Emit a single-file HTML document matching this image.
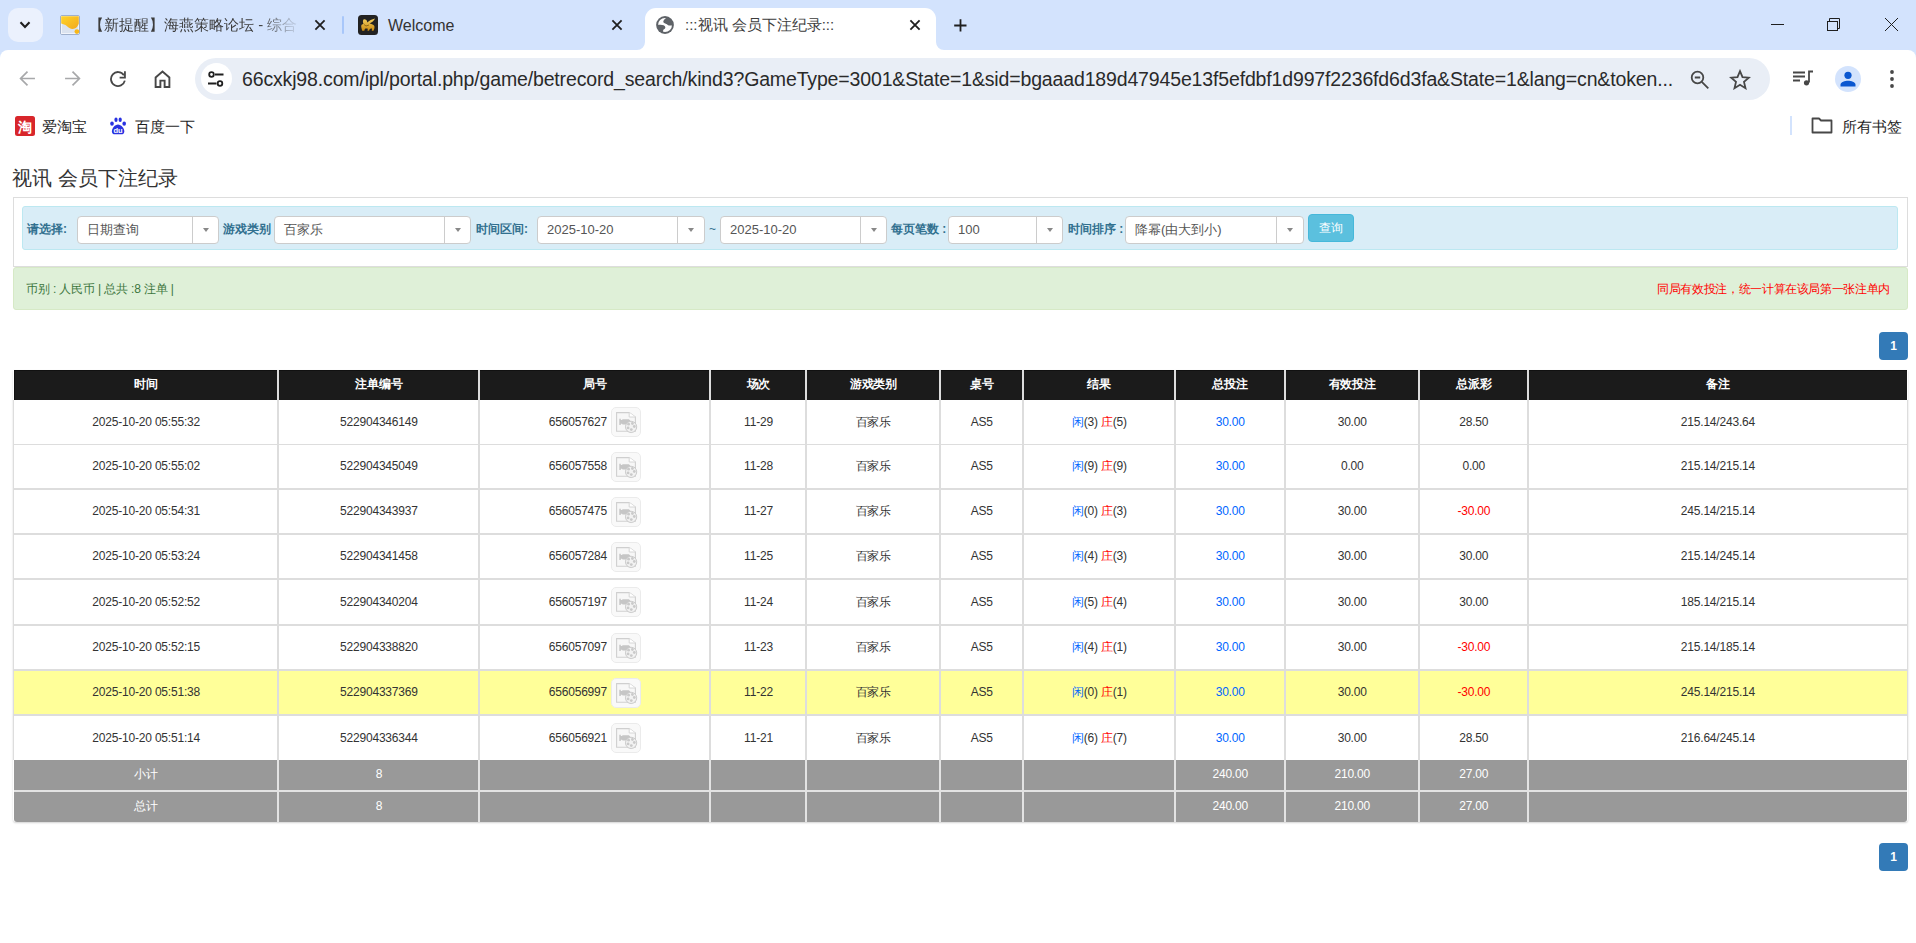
<!DOCTYPE html>
<html><head><meta charset="utf-8"><title>视讯 会员下注纪录</title>
<style>
*{margin:0;padding:0;box-sizing:border-box}
html,body{width:1916px;height:943px;overflow:hidden;background:#fff;font-family:"Liberation Sans",sans-serif;color:#333}
.a{position:absolute}
.tabstrip{left:0;top:0;width:1916px;height:60px;background:#d3e3fd}
.toolbar{left:0;top:50px;width:1916px;height:50px;background:#fff;border-radius:8px 8px 0 0}
.tabtxt{font-size:15px;color:#3c3c3c;white-space:nowrap;line-height:16px}
.omni{left:195px;top:58px;width:1575px;height:42px;background:#e9eef6;border-radius:21px}
.url{left:242px;top:68px;font-size:19.5px;line-height:22px;color:#2a2a2a;white-space:nowrap;letter-spacing:-0.15px}
.bm{font-size:15px;color:#1f1f1f;line-height:16px;white-space:nowrap}
.ttl{left:12px;top:166px;font-size:20px;line-height:24px;color:#333;white-space:nowrap}
.panel{left:13px;top:197px;width:1895px;height:70px;border:1px solid #ddd;background:#fff}
.info{left:22px;top:206px;width:1876px;height:44px;background:#d9edf7;border:1px solid #bce8f1;border-radius:3px}
.lbl{font-size:12px;font-weight:bold;color:#31708f;line-height:14px;white-space:nowrap;top:222px}
.sel{top:216px;height:28px;background:#fff;border:1px solid #ccc;border-radius:4px}
.sel .t{position:absolute;left:9px;top:5px;font-size:13px;line-height:15px;color:#555;white-space:nowrap}
.sel .d{position:absolute;top:0;bottom:0;width:1px;background:#ccc}
.sel .c{position:absolute;top:11px;width:0;height:0;border-left:3.5px solid transparent;border-right:3.5px solid transparent;border-top:4px solid #888}
.btn{left:1308px;top:214px;width:46px;height:28px;background:#5bc0de;border:1px solid #46b8da;border-radius:4px;color:#fff;font-size:12px;line-height:26px;text-align:center}
.ok{left:13px;top:267px;width:1895px;height:43px;background:#dff0d8;border:1px solid #d6e9c6;border-radius:3px}
.oktxt{font-size:12px;color:#3c763d;line-height:14px;white-space:nowrap;top:282px}
.pg{width:29px;height:28px;background:#337ab7;border-radius:4px;color:#fff;font-size:12px;font-weight:bold;text-align:center;line-height:28px;left:1879px}
.hrow{background:#1b1b1b}
.cell{position:absolute;font-size:12px;line-height:15px;white-space:nowrap;transform:translateX(-50%);letter-spacing:-0.2px}
.th{color:#fff;font-weight:bold}
.vl{position:absolute;width:2px;background:#ddd}
.hl{position:absolute;left:14px;width:1893px;background:#ddd}
.film{position:absolute}
.bl{color:#0066ff}.rd{color:#ff0000}
</style></head><body>

<div class="a tabstrip"></div>
<div class="a" style="left:8px;top:8px;width:35px;height:34px;background:#ebf1fd;border-radius:10px"></div>
<svg class="a" style="left:17px;top:17px" width="16" height="16" viewBox="0 0 16 16"><path d="M3.5 5.2L8 9.9l4.5-4.7" fill="none" stroke="#1f1f1f" stroke-width="2.1"/></svg>
<svg class="a" style="left:60px;top:15px" width="20" height="20" viewBox="0 0 20 20"><defs><linearGradient id="yg" x1="0" y1="0" x2="1" y2="1"><stop offset="0" stop-color="#ffd42a"/><stop offset="1" stop-color="#f2a91d"/></linearGradient></defs><rect x="0.5" y="0.5" width="19" height="19" rx="1.5" fill="#e9eef8" stroke="#9fb0cc"/><rect x="1.5" y="1.5" width="17" height="17" fill="#dbe3ef" stroke="#f4f7fc" stroke-width="0.8"/><path d="M1.2 1.2H18.8V8.5C18.3 10 17.8 10.5 17.3 11.5C16.3 13.2 14.5 14.1 12 14C9.5 13.8 8.3 12.2 6.8 11C5.2 9.6 3 9.4 1.2 8.6Z" fill="url(#yg)"/><circle cx="16.9" cy="16.6" r="2.4" fill="#f7b718"/></svg>
<div class="a tabtxt" style="left:89px;top:17px;width:212px;overflow:hidden;-webkit-mask-image:linear-gradient(90deg,#000 80%,transparent)">【新提醒】海燕策略论坛 - 综合</div>
<svg class="a" style="left:313px;top:18px" width="14" height="14" viewBox="0 0 14 14"><path d="M2.4 2.4l9.2 9.2M11.6 2.4L2.4 11.6" stroke="#1f1f1f" stroke-width="1.8"/></svg>
<div class="a" style="left:342px;top:16px;width:2px;height:18px;background:#a8c7fa;border-radius:1px"></div>
<svg class="a" style="left:358px;top:15px" width="20" height="20" viewBox="0 0 20 20"><defs><linearGradient id="gg" x1="0" y1="0" x2="0" y2="1"><stop offset="0" stop-color="#f4d060"/><stop offset="1" stop-color="#c98a12"/></linearGradient></defs><rect width="20" height="20" rx="3.5" fill="#222"/><path d="M5.5 4.5C7 4 8.5 4.8 9 6.2L9.3 7.5C11 5.8 14 4.2 17 3.5C16 5.5 14 7.5 11.5 8.5C13 8.8 15 9.5 16 10.5C16.8 11.5 16.5 13 16 14.5L15.5 15.8H13.8L14 13.5C13 13.2 12 13.6 11.5 14.5L11 15.8H9.5L9.8 13.8C8.5 13.5 7.5 13.5 6.8 14L6.3 15.8H4.2C3.8 14 3.2 12.5 3.2 11C3.3 9.8 4.2 9 5.5 9C5 7.5 4.5 6 5.5 4.5Z" fill="url(#gg)"/><path d="M6 9.5l2 1.5 3-1" stroke="#7a5208" stroke-width="0.7" fill="none"/></svg>
<div class="a tabtxt" style="left:388px;top:18px;font-size:16px;color:#333">Welcome</div>
<svg class="a" style="left:610px;top:18px" width="14" height="14" viewBox="0 0 14 14"><path d="M2.4 2.4l9.2 9.2M11.6 2.4L2.4 11.6" stroke="#1f1f1f" stroke-width="1.8"/></svg>
<div class="a" style="left:645px;top:8px;width:291px;height:42px;background:#fff;border-radius:11px 11px 0 0"></div>
<svg class="a" style="left:637px;top:42px" width="307" height="8" viewBox="0 0 307 8"><path d="M0 8a8 8 0 0 0 8-8v8z" fill="#fff"/><path d="M307 8a8 8 0 0 1-8-8v8z" fill="#fff"/></svg>
<svg class="a" style="left:655px;top:15px" width="20" height="20" viewBox="0 0 20 20"><defs><clipPath id="gc"><circle cx="10" cy="10" r="8"/></clipPath></defs><circle cx="10" cy="10" r="8.9" fill="#5f6368"/><circle cx="10" cy="10" r="7" fill="#fff"/><g clip-path="url(#gc)" fill="#5f6368"><path d="M10.5 0L11.2 3C9.2 4.3 7.6 6.3 8.6 7.6C9.8 8.8 11.8 8.9 12.8 9.9C13.6 10.7 15.5 10.8 20 10.3V0Z"/><path d="M0 9.8H3.5C6 9.8 8.6 9.9 9.7 11C10.8 12.2 10.4 13.6 8.9 14.3C8 14.8 8 16 8 20H0Z"/></g></svg>
<div class="a tabtxt" style="left:685px;top:17px">:::视讯 会员下注纪录:::</div>
<svg class="a" style="left:908px;top:18px" width="14" height="14" viewBox="0 0 14 14"><path d="M2.4 2.4l9.2 9.2M11.6 2.4L2.4 11.6" stroke="#1f1f1f" stroke-width="1.8"/></svg>
<svg class="a" style="left:953px;top:18px" width="15" height="15" viewBox="0 0 15 15"><path d="M7.5 1.2v12.3M1.2 7.5h12.3" stroke="#1f1f1f" stroke-width="1.8"/></svg>
<div class="a" style="left:1771px;top:24px;width:13px;height:1px;background:#1f1f1f"></div>
<svg class="a" style="left:1826px;top:17px" width="16" height="16" viewBox="0 0 16 16"><rect x="1.5" y="4.5" width="10" height="9" fill="none" stroke="#1f1f1f" stroke-width="1"/><path d="M3.5 4.5V1.5H13.5V11.5H11.5" fill="none" stroke="#1f1f1f" stroke-width="1"/></svg>
<svg class="a" style="left:1884px;top:17px" width="15" height="15" viewBox="0 0 15 15"><path d="M1 1l13 13M14 1L1 14" stroke="#1f1f1f" stroke-width="1"/></svg>
<div class="a toolbar"></div>
<svg class="a" style="left:19px;top:70px" width="17" height="17" viewBox="0 0 16 16"><path d="M15 8H2M8 1.5L1.5 8 8 14.5" fill="none" stroke="#a7a8aa" stroke-width="1.6"/></svg>
<svg class="a" style="left:64px;top:70px" width="17" height="17" viewBox="0 0 16 16"><path d="M1 8h13M8 1.5L14.5 8 8 14.5" fill="none" stroke="#a7a8aa" stroke-width="1.6"/></svg>
<svg class="a" style="left:109px;top:70px" width="17" height="17" viewBox="0 0 16 16"><path d="M14.9 10A6.6 6.6 0 1 1 14 4.9" fill="none" stroke="#474747" stroke-width="1.7"/><path d="M15 1.2V7.1H10" fill="none" stroke="#474747" stroke-width="1.7"/></svg>
<svg class="a" style="left:154px;top:70px" width="17" height="18" viewBox="0 0 16 17"><path d="M1.5 16V7L8 1.5 14.5 7v9h-4.5v-6h-4v6z" fill="none" stroke="#474747" stroke-width="1.8" stroke-linejoin="miter"/></svg>
<div class="a omni"></div>
<div class="a" style="left:201px;top:63px;width:31px;height:31px;background:#fff;border-radius:50%"></div>
<svg class="a" style="left:207px;top:70px" width="18" height="18" viewBox="0 0 18 18"><circle cx="4.5" cy="4.5" r="2.3" fill="none" stroke="#1f1f1f" stroke-width="1.8"/><path d="M8 4.5h8.5M1 13.5h8.5" stroke="#1f1f1f" stroke-width="1.8"/><circle cx="13" cy="13.5" r="2.3" fill="none" stroke="#1f1f1f" stroke-width="1.8"/></svg>
<div class="a url">66cxkj98.com/ipl/portal.php/game/betrecord_search/kind3?GameType=3001&amp;State=1&amp;sid=bgaaad189d47945e13f5efdbf1d997f2236fd6d3fa&amp;State=1&amp;lang=cn&amp;token...</div>
<svg class="a" style="left:1690px;top:70px" width="20" height="20" viewBox="0 0 20 20"><circle cx="7.5" cy="7.5" r="5.8" fill="none" stroke="#474747" stroke-width="1.8"/><path d="M4.8 7.5h5.4M11.8 11.8l6.5 6.5" stroke="#474747" stroke-width="1.8"/></svg>
<svg class="a" style="left:1729px;top:69px" width="22" height="21" viewBox="0 0 22 21"><path d="M11 2.2l2.5 6 6.4.5-4.9 4.2 1.5 6.3L11 15.8l-5.5 3.4 1.5-6.3-4.9-4.2 6.4-.5z" fill="none" stroke="#474747" stroke-width="1.8" stroke-linejoin="miter"/></svg>
<svg class="a" style="left:1792px;top:70px" width="22" height="17" viewBox="0 0 22 17"><path d="M1 2.5h12M1 6.5h12M1 10.5h7" stroke="#474747" stroke-width="1.8"/><path d="M17 12.5V1.5h4" fill="none" stroke="#474747" stroke-width="1.8"/><circle cx="14.5" cy="12.8" r="2.6" fill="#474747"/></svg>
<div class="a" style="left:1835px;top:66px;width:26px;height:26px;background:#d3e3fd;border-radius:50%"></div>
<svg class="a" style="left:1838px;top:69px" width="20" height="20" viewBox="0 0 20 20"><circle cx="10" cy="6.3" r="3.6" fill="#0b57d0"/><path d="M2.5 15.8c0-2.6 4.5-4 7.5-4s7.5 1.4 7.5 4v1.6h-15z" fill="#0b57d0"/></svg>
<svg class="a" style="left:1888px;top:69px" width="8" height="20" viewBox="0 0 8 20"><circle cx="4" cy="3" r="1.9" fill="#474747"/><circle cx="4" cy="10" r="1.9" fill="#474747"/><circle cx="4" cy="17" r="1.9" fill="#474747"/></svg>
<svg class="a" style="left:15px;top:116px" width="20" height="20" viewBox="0 0 20 20"><rect width="20" height="20" rx="2.5" fill="#d8262b"/><text x="10" y="15.5" font-size="14" font-weight="bold" text-anchor="middle" fill="#fff" font-family="Liberation Sans,sans-serif">淘</text></svg>
<div class="a bm" style="left:42px;top:119px">爱淘宝</div>
<svg class="a" style="left:109px;top:117px" width="18" height="18" viewBox="0 0 18 18"><ellipse cx="7" cy="2.8" rx="1.6" ry="2.3" fill="#2932e1"/><ellipse cx="11.2" cy="2.8" rx="1.6" ry="2.3" fill="#2932e1"/><ellipse cx="3" cy="6.6" rx="1.8" ry="2.2" fill="#2932e1"/><ellipse cx="15.2" cy="6.6" rx="1.8" ry="2.2" fill="#2932e1"/><path d="M9 7.6C12 7.6 15.3 11.3 15.3 14.4C15.3 16.4 13.9 17.2 12.5 17.2H5.7C4.3 17.2 2.9 16.4 2.9 14.4C2.9 11.3 6 7.6 9 7.6Z" fill="#2932e1"/><text x="9.1" y="15.6" font-size="7.5" font-weight="bold" fill="#fff" text-anchor="middle" font-family="Liberation Sans,sans-serif">du</text></svg>
<div class="a bm" style="left:135px;top:119px">百度一下</div>
<div class="a" style="left:1790px;top:116px;width:2px;height:19px;background:#d3e3fd"></div>
<svg class="a" style="left:1811px;top:117px" width="22" height="17" viewBox="0 0 22 17"><path d="M1.5 1.5h6.5l2 2h10.5v12H1.5z" fill="none" stroke="#474747" stroke-width="1.8" stroke-linejoin="round"/></svg>
<div class="a bm" style="left:1842px;top:119px">所有书签</div>
<div class="a ttl">视讯 会员下注纪录</div>
<div class="a panel"></div>
<div class="a info"></div>
<div class="a lbl" style="left:27px">请选择:</div>
<div class="a sel" style="left:77px;width:142px"><div class="t">日期查询</div><div class="d" style="left:114px"></div><div class="c" style="left:124.5px"></div></div>
<div class="a lbl" style="left:223px">游戏类别</div>
<div class="a sel" style="left:274px;width:197px"><div class="t">百家乐</div><div class="d" style="left:169px"></div><div class="c" style="left:179.5px"></div></div>
<div class="a lbl" style="left:476px">时间区间:</div>
<div class="a sel" style="left:537px;width:168px"><div class="t">2025-10-20</div><div class="d" style="left:139px"></div><div class="c" style="left:150.0px"></div></div>
<div class="a lbl" style="left:709px;font-weight:normal">~</div>
<div class="a sel" style="left:720px;width:167px"><div class="t">2025-10-20</div><div class="d" style="left:139px"></div><div class="c" style="left:149.5px"></div></div>
<div class="a lbl" style="left:891px">每页笔数 :</div>
<div class="a sel" style="left:948px;width:115px"><div class="t">100</div><div class="d" style="left:87px"></div><div class="c" style="left:97.5px"></div></div>
<div class="a lbl" style="left:1068px">时间排序 :</div>
<div class="a sel" style="left:1125px;width:179px"><div class="t">降幂(由大到小)</div><div class="d" style="left:150px"></div><div class="c" style="left:161.0px"></div></div>
<div class="a btn">查询</div>
<div class="a ok"></div>
<div class="a oktxt" style="left:26px;letter-spacing:-0.15px">币别 : 人民币 | 总共 :8 注单 |</div>
<div class="a oktxt" style="left:1657px;color:#ff0000;letter-spacing:-0.35px">同局有效投注，统一计算在该局第一张注单内</div>
<div class="a pg" style="top:332px">1</div>
<div class="a pg" style="top:843px">1</div>
<div class="a" style="left:13px;top:370px;width:1895px;height:452px;border-radius:0 0 3px 3px;box-shadow:0 1px 2px rgba(0,0,0,.18)"></div>
<div class="a hrow" style="left:14px;top:370px;width:1893px;height:30px;box-shadow:inset 1px 1px 0 #111"></div>
<div class="cell th" style="left:146.2px;top:377px">时间</div>
<div class="cell th" style="left:378.9px;top:377px">注单编号</div>
<div class="cell th" style="left:594.9px;top:377px">局号</div>
<div class="cell th" style="left:758.5px;top:377px">场次</div>
<div class="cell th" style="left:873.4px;top:377px">游戏类别</div>
<div class="cell th" style="left:981.8px;top:377px">桌号</div>
<div class="cell th" style="left:1099.3px;top:377px">结果</div>
<div class="cell th" style="left:1230.2px;top:377px">总投注</div>
<div class="cell th" style="left:1352.2px;top:377px">有效投注</div>
<div class="cell th" style="left:1473.8px;top:377px">总派彩</div>
<div class="cell th" style="left:1717.9px;top:377px">备注</div>
<div class="cell" style="left:146.2px;top:414.5px">2025-10-20 05:55:32</div>
<div class="cell" style="left:378.9px;top:414.5px">522904346149</div>
<div class="cell" style="left:577.9px;top:414.5px">656057627</div>
<div class="a" style="left:611px;top:407.0px"><svg class="film" width="30" height="30" viewBox="0 0 30 30"><rect x="0.5" y="0.5" width="29" height="29" rx="4.5" fill="#f9f9f9" stroke="#ebebeb"/><path d="M5.6 5.6h12.6l6.2 4.4v14.2H5.6z" fill="#f7f7f7" stroke="#cfcfcf" stroke-width="1.1"/><path d="M18.2 5.6v4.4h6.2" fill="#fff" stroke="#d6d6d6" stroke-width="1"/><path d="M8.3 11.8h1.5v1.2h1.2l.6-.8h6.2l1.5 1.2v3.2l-1.5 1h-6.2l-.6-.8h-1.2v1.1h-1.5z" fill="#c6c6c6"/><circle cx="20.1" cy="19.9" r="5.6" fill="#f2f2f2" stroke="#cbcbcb" stroke-width="1"/><g fill="#cacaca"><circle cx="17.6" cy="17.2" r="1.4"/><circle cx="21.4" cy="16.5" r="1.4"/><circle cx="23.3" cy="19.5" r="1.4"/><circle cx="20.3" cy="22.6" r="1.4"/><circle cx="17.1" cy="20.9" r="1.4"/></g></svg></div>
<div class="cell" style="left:758.5px;top:414.5px">11-29</div>
<div class="cell" style="left:873.4px;top:414.5px">百家乐</div>
<div class="cell" style="left:981.8px;top:414.5px">AS5</div>
<div class="cell" style="left:1099.3px;top:414.5px"><span class="bl">闲</span>(3) <span class="rd">庄</span>(5)</div>
<div class="cell bl" style="left:1230.2px;top:414.5px">30.00</div>
<div class="cell" style="left:1352.2px;top:414.5px">30.00</div>
<div class="cell" style="left:1473.8px;top:414.5px">28.50</div>
<div class="cell" style="left:1717.9px;top:414.5px">215.14/243.64</div>
<div class="cell" style="left:146.2px;top:459.0px">2025-10-20 05:55:02</div>
<div class="cell" style="left:378.9px;top:459.0px">522904345049</div>
<div class="cell" style="left:577.9px;top:459.0px">656057558</div>
<div class="a" style="left:611px;top:451.5px"><svg class="film" width="30" height="30" viewBox="0 0 30 30"><rect x="0.5" y="0.5" width="29" height="29" rx="4.5" fill="#f9f9f9" stroke="#ebebeb"/><path d="M5.6 5.6h12.6l6.2 4.4v14.2H5.6z" fill="#f7f7f7" stroke="#cfcfcf" stroke-width="1.1"/><path d="M18.2 5.6v4.4h6.2" fill="#fff" stroke="#d6d6d6" stroke-width="1"/><path d="M8.3 11.8h1.5v1.2h1.2l.6-.8h6.2l1.5 1.2v3.2l-1.5 1h-6.2l-.6-.8h-1.2v1.1h-1.5z" fill="#c6c6c6"/><circle cx="20.1" cy="19.9" r="5.6" fill="#f2f2f2" stroke="#cbcbcb" stroke-width="1"/><g fill="#cacaca"><circle cx="17.6" cy="17.2" r="1.4"/><circle cx="21.4" cy="16.5" r="1.4"/><circle cx="23.3" cy="19.5" r="1.4"/><circle cx="20.3" cy="22.6" r="1.4"/><circle cx="17.1" cy="20.9" r="1.4"/></g></svg></div>
<div class="cell" style="left:758.5px;top:459.0px">11-28</div>
<div class="cell" style="left:873.4px;top:459.0px">百家乐</div>
<div class="cell" style="left:981.8px;top:459.0px">AS5</div>
<div class="cell" style="left:1099.3px;top:459.0px"><span class="bl">闲</span>(9) <span class="rd">庄</span>(9)</div>
<div class="cell bl" style="left:1230.2px;top:459.0px">30.00</div>
<div class="cell" style="left:1352.2px;top:459.0px">0.00</div>
<div class="cell" style="left:1473.8px;top:459.0px">0.00</div>
<div class="cell" style="left:1717.9px;top:459.0px">215.14/215.14</div>
<div class="cell" style="left:146.2px;top:504.0px">2025-10-20 05:54:31</div>
<div class="cell" style="left:378.9px;top:504.0px">522904343937</div>
<div class="cell" style="left:577.9px;top:504.0px">656057475</div>
<div class="a" style="left:611px;top:496.5px"><svg class="film" width="30" height="30" viewBox="0 0 30 30"><rect x="0.5" y="0.5" width="29" height="29" rx="4.5" fill="#f9f9f9" stroke="#ebebeb"/><path d="M5.6 5.6h12.6l6.2 4.4v14.2H5.6z" fill="#f7f7f7" stroke="#cfcfcf" stroke-width="1.1"/><path d="M18.2 5.6v4.4h6.2" fill="#fff" stroke="#d6d6d6" stroke-width="1"/><path d="M8.3 11.8h1.5v1.2h1.2l.6-.8h6.2l1.5 1.2v3.2l-1.5 1h-6.2l-.6-.8h-1.2v1.1h-1.5z" fill="#c6c6c6"/><circle cx="20.1" cy="19.9" r="5.6" fill="#f2f2f2" stroke="#cbcbcb" stroke-width="1"/><g fill="#cacaca"><circle cx="17.6" cy="17.2" r="1.4"/><circle cx="21.4" cy="16.5" r="1.4"/><circle cx="23.3" cy="19.5" r="1.4"/><circle cx="20.3" cy="22.6" r="1.4"/><circle cx="17.1" cy="20.9" r="1.4"/></g></svg></div>
<div class="cell" style="left:758.5px;top:504.0px">11-27</div>
<div class="cell" style="left:873.4px;top:504.0px">百家乐</div>
<div class="cell" style="left:981.8px;top:504.0px">AS5</div>
<div class="cell" style="left:1099.3px;top:504.0px"><span class="bl">闲</span>(0) <span class="rd">庄</span>(3)</div>
<div class="cell bl" style="left:1230.2px;top:504.0px">30.00</div>
<div class="cell" style="left:1352.2px;top:504.0px">30.00</div>
<div class="cell rd" style="left:1473.8px;top:504.0px">-30.00</div>
<div class="cell" style="left:1717.9px;top:504.0px">245.14/215.14</div>
<div class="cell" style="left:146.2px;top:549.0px">2025-10-20 05:53:24</div>
<div class="cell" style="left:378.9px;top:549.0px">522904341458</div>
<div class="cell" style="left:577.9px;top:549.0px">656057284</div>
<div class="a" style="left:611px;top:541.5px"><svg class="film" width="30" height="30" viewBox="0 0 30 30"><rect x="0.5" y="0.5" width="29" height="29" rx="4.5" fill="#f9f9f9" stroke="#ebebeb"/><path d="M5.6 5.6h12.6l6.2 4.4v14.2H5.6z" fill="#f7f7f7" stroke="#cfcfcf" stroke-width="1.1"/><path d="M18.2 5.6v4.4h6.2" fill="#fff" stroke="#d6d6d6" stroke-width="1"/><path d="M8.3 11.8h1.5v1.2h1.2l.6-.8h6.2l1.5 1.2v3.2l-1.5 1h-6.2l-.6-.8h-1.2v1.1h-1.5z" fill="#c6c6c6"/><circle cx="20.1" cy="19.9" r="5.6" fill="#f2f2f2" stroke="#cbcbcb" stroke-width="1"/><g fill="#cacaca"><circle cx="17.6" cy="17.2" r="1.4"/><circle cx="21.4" cy="16.5" r="1.4"/><circle cx="23.3" cy="19.5" r="1.4"/><circle cx="20.3" cy="22.6" r="1.4"/><circle cx="17.1" cy="20.9" r="1.4"/></g></svg></div>
<div class="cell" style="left:758.5px;top:549.0px">11-25</div>
<div class="cell" style="left:873.4px;top:549.0px">百家乐</div>
<div class="cell" style="left:981.8px;top:549.0px">AS5</div>
<div class="cell" style="left:1099.3px;top:549.0px"><span class="bl">闲</span>(4) <span class="rd">庄</span>(3)</div>
<div class="cell bl" style="left:1230.2px;top:549.0px">30.00</div>
<div class="cell" style="left:1352.2px;top:549.0px">30.00</div>
<div class="cell" style="left:1473.8px;top:549.0px">30.00</div>
<div class="cell" style="left:1717.9px;top:549.0px">215.14/245.14</div>
<div class="cell" style="left:146.2px;top:594.5px">2025-10-20 05:52:52</div>
<div class="cell" style="left:378.9px;top:594.5px">522904340204</div>
<div class="cell" style="left:577.9px;top:594.5px">656057197</div>
<div class="a" style="left:611px;top:587.0px"><svg class="film" width="30" height="30" viewBox="0 0 30 30"><rect x="0.5" y="0.5" width="29" height="29" rx="4.5" fill="#f9f9f9" stroke="#ebebeb"/><path d="M5.6 5.6h12.6l6.2 4.4v14.2H5.6z" fill="#f7f7f7" stroke="#cfcfcf" stroke-width="1.1"/><path d="M18.2 5.6v4.4h6.2" fill="#fff" stroke="#d6d6d6" stroke-width="1"/><path d="M8.3 11.8h1.5v1.2h1.2l.6-.8h6.2l1.5 1.2v3.2l-1.5 1h-6.2l-.6-.8h-1.2v1.1h-1.5z" fill="#c6c6c6"/><circle cx="20.1" cy="19.9" r="5.6" fill="#f2f2f2" stroke="#cbcbcb" stroke-width="1"/><g fill="#cacaca"><circle cx="17.6" cy="17.2" r="1.4"/><circle cx="21.4" cy="16.5" r="1.4"/><circle cx="23.3" cy="19.5" r="1.4"/><circle cx="20.3" cy="22.6" r="1.4"/><circle cx="17.1" cy="20.9" r="1.4"/></g></svg></div>
<div class="cell" style="left:758.5px;top:594.5px">11-24</div>
<div class="cell" style="left:873.4px;top:594.5px">百家乐</div>
<div class="cell" style="left:981.8px;top:594.5px">AS5</div>
<div class="cell" style="left:1099.3px;top:594.5px"><span class="bl">闲</span>(5) <span class="rd">庄</span>(4)</div>
<div class="cell bl" style="left:1230.2px;top:594.5px">30.00</div>
<div class="cell" style="left:1352.2px;top:594.5px">30.00</div>
<div class="cell" style="left:1473.8px;top:594.5px">30.00</div>
<div class="cell" style="left:1717.9px;top:594.5px">185.14/215.14</div>
<div class="cell" style="left:146.2px;top:640.0px">2025-10-20 05:52:15</div>
<div class="cell" style="left:378.9px;top:640.0px">522904338820</div>
<div class="cell" style="left:577.9px;top:640.0px">656057097</div>
<div class="a" style="left:611px;top:632.5px"><svg class="film" width="30" height="30" viewBox="0 0 30 30"><rect x="0.5" y="0.5" width="29" height="29" rx="4.5" fill="#f9f9f9" stroke="#ebebeb"/><path d="M5.6 5.6h12.6l6.2 4.4v14.2H5.6z" fill="#f7f7f7" stroke="#cfcfcf" stroke-width="1.1"/><path d="M18.2 5.6v4.4h6.2" fill="#fff" stroke="#d6d6d6" stroke-width="1"/><path d="M8.3 11.8h1.5v1.2h1.2l.6-.8h6.2l1.5 1.2v3.2l-1.5 1h-6.2l-.6-.8h-1.2v1.1h-1.5z" fill="#c6c6c6"/><circle cx="20.1" cy="19.9" r="5.6" fill="#f2f2f2" stroke="#cbcbcb" stroke-width="1"/><g fill="#cacaca"><circle cx="17.6" cy="17.2" r="1.4"/><circle cx="21.4" cy="16.5" r="1.4"/><circle cx="23.3" cy="19.5" r="1.4"/><circle cx="20.3" cy="22.6" r="1.4"/><circle cx="17.1" cy="20.9" r="1.4"/></g></svg></div>
<div class="cell" style="left:758.5px;top:640.0px">11-23</div>
<div class="cell" style="left:873.4px;top:640.0px">百家乐</div>
<div class="cell" style="left:981.8px;top:640.0px">AS5</div>
<div class="cell" style="left:1099.3px;top:640.0px"><span class="bl">闲</span>(4) <span class="rd">庄</span>(1)</div>
<div class="cell bl" style="left:1230.2px;top:640.0px">30.00</div>
<div class="cell" style="left:1352.2px;top:640.0px">30.00</div>
<div class="cell rd" style="left:1473.8px;top:640.0px">-30.00</div>
<div class="cell" style="left:1717.9px;top:640.0px">215.14/185.14</div>
<div class="a" style="left:14px;top:671px;width:1893px;height:43px;background:#ffff99"></div>
<div class="cell" style="left:146.2px;top:685.0px">2025-10-20 05:51:38</div>
<div class="cell" style="left:378.9px;top:685.0px">522904337369</div>
<div class="cell" style="left:577.9px;top:685.0px">656056997</div>
<div class="a" style="left:611px;top:677.5px"><svg class="film" width="30" height="30" viewBox="0 0 30 30"><rect x="0.5" y="0.5" width="29" height="29" rx="4.5" fill="#f9f9f9" stroke="#ebebeb"/><path d="M5.6 5.6h12.6l6.2 4.4v14.2H5.6z" fill="#f7f7f7" stroke="#cfcfcf" stroke-width="1.1"/><path d="M18.2 5.6v4.4h6.2" fill="#fff" stroke="#d6d6d6" stroke-width="1"/><path d="M8.3 11.8h1.5v1.2h1.2l.6-.8h6.2l1.5 1.2v3.2l-1.5 1h-6.2l-.6-.8h-1.2v1.1h-1.5z" fill="#c6c6c6"/><circle cx="20.1" cy="19.9" r="5.6" fill="#f2f2f2" stroke="#cbcbcb" stroke-width="1"/><g fill="#cacaca"><circle cx="17.6" cy="17.2" r="1.4"/><circle cx="21.4" cy="16.5" r="1.4"/><circle cx="23.3" cy="19.5" r="1.4"/><circle cx="20.3" cy="22.6" r="1.4"/><circle cx="17.1" cy="20.9" r="1.4"/></g></svg></div>
<div class="cell" style="left:758.5px;top:685.0px">11-22</div>
<div class="cell" style="left:873.4px;top:685.0px">百家乐</div>
<div class="cell" style="left:981.8px;top:685.0px">AS5</div>
<div class="cell" style="left:1099.3px;top:685.0px"><span class="bl">闲</span>(0) <span class="rd">庄</span>(1)</div>
<div class="cell bl" style="left:1230.2px;top:685.0px">30.00</div>
<div class="cell" style="left:1352.2px;top:685.0px">30.00</div>
<div class="cell rd" style="left:1473.8px;top:685.0px">-30.00</div>
<div class="cell" style="left:1717.9px;top:685.0px">245.14/215.14</div>
<div class="cell" style="left:146.2px;top:730.5px">2025-10-20 05:51:14</div>
<div class="cell" style="left:378.9px;top:730.5px">522904336344</div>
<div class="cell" style="left:577.9px;top:730.5px">656056921</div>
<div class="a" style="left:611px;top:723.0px"><svg class="film" width="30" height="30" viewBox="0 0 30 30"><rect x="0.5" y="0.5" width="29" height="29" rx="4.5" fill="#f9f9f9" stroke="#ebebeb"/><path d="M5.6 5.6h12.6l6.2 4.4v14.2H5.6z" fill="#f7f7f7" stroke="#cfcfcf" stroke-width="1.1"/><path d="M18.2 5.6v4.4h6.2" fill="#fff" stroke="#d6d6d6" stroke-width="1"/><path d="M8.3 11.8h1.5v1.2h1.2l.6-.8h6.2l1.5 1.2v3.2l-1.5 1h-6.2l-.6-.8h-1.2v1.1h-1.5z" fill="#c6c6c6"/><circle cx="20.1" cy="19.9" r="5.6" fill="#f2f2f2" stroke="#cbcbcb" stroke-width="1"/><g fill="#cacaca"><circle cx="17.6" cy="17.2" r="1.4"/><circle cx="21.4" cy="16.5" r="1.4"/><circle cx="23.3" cy="19.5" r="1.4"/><circle cx="20.3" cy="22.6" r="1.4"/><circle cx="17.1" cy="20.9" r="1.4"/></g></svg></div>
<div class="cell" style="left:758.5px;top:730.5px">11-21</div>
<div class="cell" style="left:873.4px;top:730.5px">百家乐</div>
<div class="cell" style="left:981.8px;top:730.5px">AS5</div>
<div class="cell" style="left:1099.3px;top:730.5px"><span class="bl">闲</span>(6) <span class="rd">庄</span>(7)</div>
<div class="cell bl" style="left:1230.2px;top:730.5px">30.00</div>
<div class="cell" style="left:1352.2px;top:730.5px">30.00</div>
<div class="cell" style="left:1473.8px;top:730.5px">28.50</div>
<div class="cell" style="left:1717.9px;top:730.5px">216.64/245.14</div>
<div class="hl" style="top:444px;height:1px"></div>
<div class="hl" style="top:488px;height:2px"></div>
<div class="hl" style="top:533px;height:2px"></div>
<div class="hl" style="top:578px;height:2px"></div>
<div class="hl" style="top:624px;height:2px"></div>
<div class="hl" style="top:669px;height:2px"></div>
<div class="hl" style="top:714px;height:2px"></div>
<div class="a" style="left:14px;top:760px;width:1893px;height:62px;background:#999;border-radius:0 0 3px 3px"></div>
<div class="a" style="left:14px;top:790px;width:1893px;height:2px;background:#e3e3e3"></div>
<div class="cell" style="left:146.2px;top:766.5px;color:#fff">小计</div>
<div class="cell" style="left:378.9px;top:766.5px;color:#fff">8</div>
<div class="cell" style="left:1230.2px;top:766.5px;color:#fff">240.00</div>
<div class="cell" style="left:1352.2px;top:766.5px;color:#fff">210.00</div>
<div class="cell" style="left:1473.8px;top:766.5px;color:#fff">27.00</div>
<div class="cell" style="left:146.2px;top:798.5px;color:#fff">总计</div>
<div class="cell" style="left:378.9px;top:798.5px;color:#fff">8</div>
<div class="cell" style="left:1230.2px;top:798.5px;color:#fff">240.00</div>
<div class="cell" style="left:1352.2px;top:798.5px;color:#fff">210.00</div>
<div class="cell" style="left:1473.8px;top:798.5px;color:#fff">27.00</div>
<div class="vl" style="left:13px;top:400px;height:360px;width:1px"></div>
<div class="vl" style="left:1907px;top:400px;height:360px;width:1px"></div>
<div class="vl" style="left:277px;top:370px;height:390px"></div>
<div class="vl" style="left:277px;top:760px;height:62px;background:#e3e3e3"></div>
<div class="vl" style="left:478px;top:370px;height:390px"></div>
<div class="vl" style="left:478px;top:760px;height:62px;background:#e3e3e3"></div>
<div class="vl" style="left:709px;top:370px;height:390px"></div>
<div class="vl" style="left:709px;top:760px;height:62px;background:#e3e3e3"></div>
<div class="vl" style="left:805px;top:370px;height:390px"></div>
<div class="vl" style="left:805px;top:760px;height:62px;background:#e3e3e3"></div>
<div class="vl" style="left:939px;top:370px;height:390px"></div>
<div class="vl" style="left:939px;top:760px;height:62px;background:#e3e3e3"></div>
<div class="vl" style="left:1022px;top:370px;height:390px"></div>
<div class="vl" style="left:1022px;top:760px;height:62px;background:#e3e3e3"></div>
<div class="vl" style="left:1174px;top:370px;height:390px"></div>
<div class="vl" style="left:1174px;top:760px;height:62px;background:#e3e3e3"></div>
<div class="vl" style="left:1284px;top:370px;height:390px"></div>
<div class="vl" style="left:1284px;top:760px;height:62px;background:#e3e3e3"></div>
<div class="vl" style="left:1418px;top:370px;height:390px"></div>
<div class="vl" style="left:1418px;top:760px;height:62px;background:#e3e3e3"></div>
<div class="vl" style="left:1527px;top:370px;height:390px"></div>
<div class="vl" style="left:1527px;top:760px;height:62px;background:#e3e3e3"></div>
</body></html>
